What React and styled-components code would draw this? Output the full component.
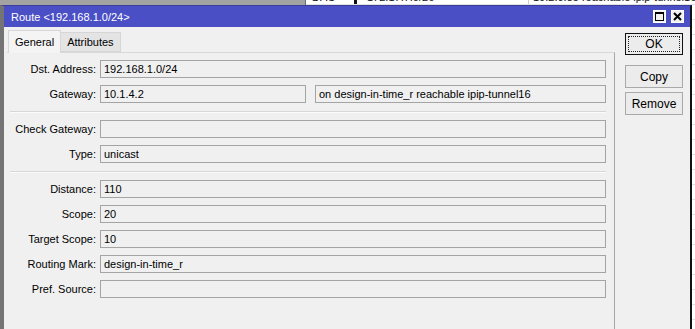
import React from 'react';
import styled, { createGlobalStyle } from 'styled-components';

const GlobalStyle = createGlobalStyle`
  html, body {
    margin: 0;
    padding: 0;
    overflow: hidden;
  }
  body {
    font-family: "Liberation Sans", Arial, sans-serif;
    font-size: 11px;
    color: #000;
  }
`;

const Desktop = styled.div`
  position: relative;
  width: 695px;
  height: 329px;
  overflow: hidden;
  display: grid;
  grid-template-columns: 305px 1fr;
`;

const GrayPane = styled.div`
  background: #a3a3a3;
`;

const ListPane = styled.div`
  background: #fff;
  border-left: 1px solid #6a6a6a;
  margin-top: -10px;
`;

const ListRow = styled.div`
  display: grid;
  grid-template-columns: 48px 174px 1fr;
  height: 15px;
  line-height: 15px;
  border-bottom: 1px solid #e2e2e2;
  box-sizing: border-box;
  white-space: nowrap;
  color: #111;
`;

const ListCell = styled.div`
  padding-left: ${(p) => p.$pad || 5}px;
  border-left: ${(p) => (p.$mark ? '3px solid #111' : p.$line ? '1px solid #cfcfcf' : 'none')};
  overflow: hidden;
`;

const Window = styled.div`
  position: absolute;
  left: 0;
  top: 5px;
  width: 692px;
  bottom: 0;
  box-sizing: border-box;
  border-left: 4px solid #747474;
  border-right: 2px solid #111;
  border-top: 1px solid #3a3e9a;
  background: #f0f0f0;
  display: flex;
  flex-direction: column;
`;

const TitleBar = styled.div`
  height: 21px;
  background: #4a4fc6;
  display: flex;
  align-items: center;
  justify-content: space-between;
  padding: 0 6px 0 7px;
  color: #fff;
  font-size: 11px;
`;

const TitleButtons = styled.div`
  display: flex;
  gap: 5px;
`;

const TitleButton = styled.div`
  width: 11px;
  height: 11px;
  background: #f2f2f2;
  border: 1px solid #fff;
  display: flex;
  align-items: center;
  justify-content: center;
`;

const Body = styled.div`
  flex: 1;
  display: flex;
  padding: 3px 0 0 3px;
`;

const TabArea = styled.div`
  width: 608px;
  display: flex;
  flex-direction: column;
`;

const Tabs = styled.div`
  display: flex;
  align-items: flex-end;
  height: 22px;
  padding-left: 1px;
  position: relative;
  z-index: 1;
`;

const Tab = styled.div`
  box-sizing: border-box;
  height: ${(p) => (p.$active ? 23 : 20)}px;
  margin-bottom: ${(p) => (p.$active ? -1 : 0)}px;
  padding: 0 6px;
  display: flex;
  align-items: center;
  background: ${(p) => (p.$active ? '#f4f4f4' : '#e4e4e4')};
  border: 1px solid #d6d6d6;
  border-bottom: ${(p) => (p.$active ? 'none' : '1px solid #d6d6d6')};
  border-left: ${(p) => (p.$active ? '1px solid #d6d6d6' : 'none')};
`;

const Panel = styled.div`
  flex: 1;
  border-top: 1px solid #d8d8d8;
  border-right: 1px solid #a6a6a6;
  padding: 7px 8px 0 0;
`;

const Form = styled.div`
  display: grid;
  grid-template-columns: 89px 1fr;
  column-gap: 4px;
  row-gap: 7px;
  align-items: center;
`;

const Label = styled.div`
  text-align: right;
  white-space: nowrap;
`;

const Field = styled.div`
  box-sizing: border-box;
  height: 18px;
  width: ${(p) => (p.$w ? `${p.$w}px` : 'auto')};
  flex: ${(p) => (p.$w ? 'none' : '1')};
  border: 1px solid #a4a4a4;
  background: #f0f0f0;
  padding: 0 3px;
  line-height: 16px;
  white-space: nowrap;
  overflow: hidden;
`;

const Pair = styled.div`
  display: flex;
  gap: 9px;
`;

const Separator = styled.div`
  grid-column: 1 / -1;
  margin: 1px 0 0 3px;
  height: 1px;
  background: #d7d7d7;
  border-bottom: 1px solid #fbfbfb;
`;

const Side = styled.div`
  margin-left: 10px;
  padding-top: 3px;
  width: 58px;
  display: flex;
  flex-direction: column;
`;

const Button = styled.div`
  box-sizing: border-box;
  height: ${(p) => p.$h || 23}px;
  margin-top: ${(p) => p.$mt || 0}px;
  border: 1px solid ${(p) => (p.$default ? '#111' : '#a9a9a9')};
  background: #ececec;
  display: flex;
  align-items: center;
  justify-content: center;
  font-size: 12px;
  position: relative;
  ${(p) =>
    p.$default &&
    `
    &::after {
      content: '';
      position: absolute;
      inset: 2px;
      border: 1px dotted #222;
    }
  `}
`;

const rows = [
  { label: 'Dst. Address:', value: '192.168.1.0/24' },
  { label: 'Gateway:', pair: ['10.1.4.2', 'on design-in-time_r reachable ipip-tunnel16'] },
  { sep: true },
  { label: 'Check Gateway:', value: '' },
  { label: 'Type:', value: 'unicast' },
  { sep: true },
  { label: 'Distance:', value: '110' },
  { label: 'Scope:', value: '20' },
  { label: 'Target Scope:', value: '10' },
  { label: 'Routing Mark:', value: 'design-in-time_r' },
  { label: 'Pref. Source:', value: '' },
];

export default function App() {
  const blank = Array.from({ length: 24 });
  return (
    <>
      <GlobalStyle />
      <Desktop>
        <GrayPane />
        <ListPane>
          <ListRow>
            <ListCell $pad={6}>DAC</ListCell>
            <ListCell $mark $pad={10}>172.17.7.0/26</ListCell>
            <ListCell $line $pad={4}>10.2.0.85 reachable ipip-tunnel16</ListCell>
          </ListRow>
          {blank.map((_, i) => (
            <ListRow key={i} />
          ))}
        </ListPane>

        <Window>
          <TitleBar>
            <span>Route &lt;192.168.1.0/24&gt;</span>
            <TitleButtons>
              <TitleButton>
                <svg width="9" height="9" viewBox="0 0 9 9">
                  <rect x="0.5" y="0.5" width="8" height="8" fill="none" stroke="#000" />
                  <line x1="0" y1="1.5" x2="9" y2="1.5" stroke="#000" />
                </svg>
              </TitleButton>
              <TitleButton>
                <svg width="9" height="9" viewBox="0 0 9 9">
                  <path d="M1 1 L8 8 M8 1 L1 8" stroke="#000" strokeWidth="2" />
                </svg>
              </TitleButton>
            </TitleButtons>
          </TitleBar>
          <Body>
            <TabArea>
              <Tabs>
                <Tab $active>General</Tab>
                <Tab>Attributes</Tab>
              </Tabs>
              <Panel>
                <Form>
                  {rows.map((r, i) =>
                    r.sep ? (
                      <Separator key={i} />
                    ) : (
                      <React.Fragment key={i}>
                        <Label>{r.label}</Label>
                        {r.pair ? (
                          <Pair>
                            <Field $w={206}>{r.pair[0]}</Field>
                            <Field>{r.pair[1]}</Field>
                          </Pair>
                        ) : (
                          <Field>{r.value}</Field>
                        )}
                      </React.Fragment>
                    )
                  )}
                </Form>
              </Panel>
            </TabArea>
            <Side>
              <Button $default $h={22}>OK</Button>
              <Button $mt={10}>Copy</Button>
              <Button $mt={4}>Remove</Button>
            </Side>
          </Body>
        </Window>
      </Desktop>
    </>
  );
}
